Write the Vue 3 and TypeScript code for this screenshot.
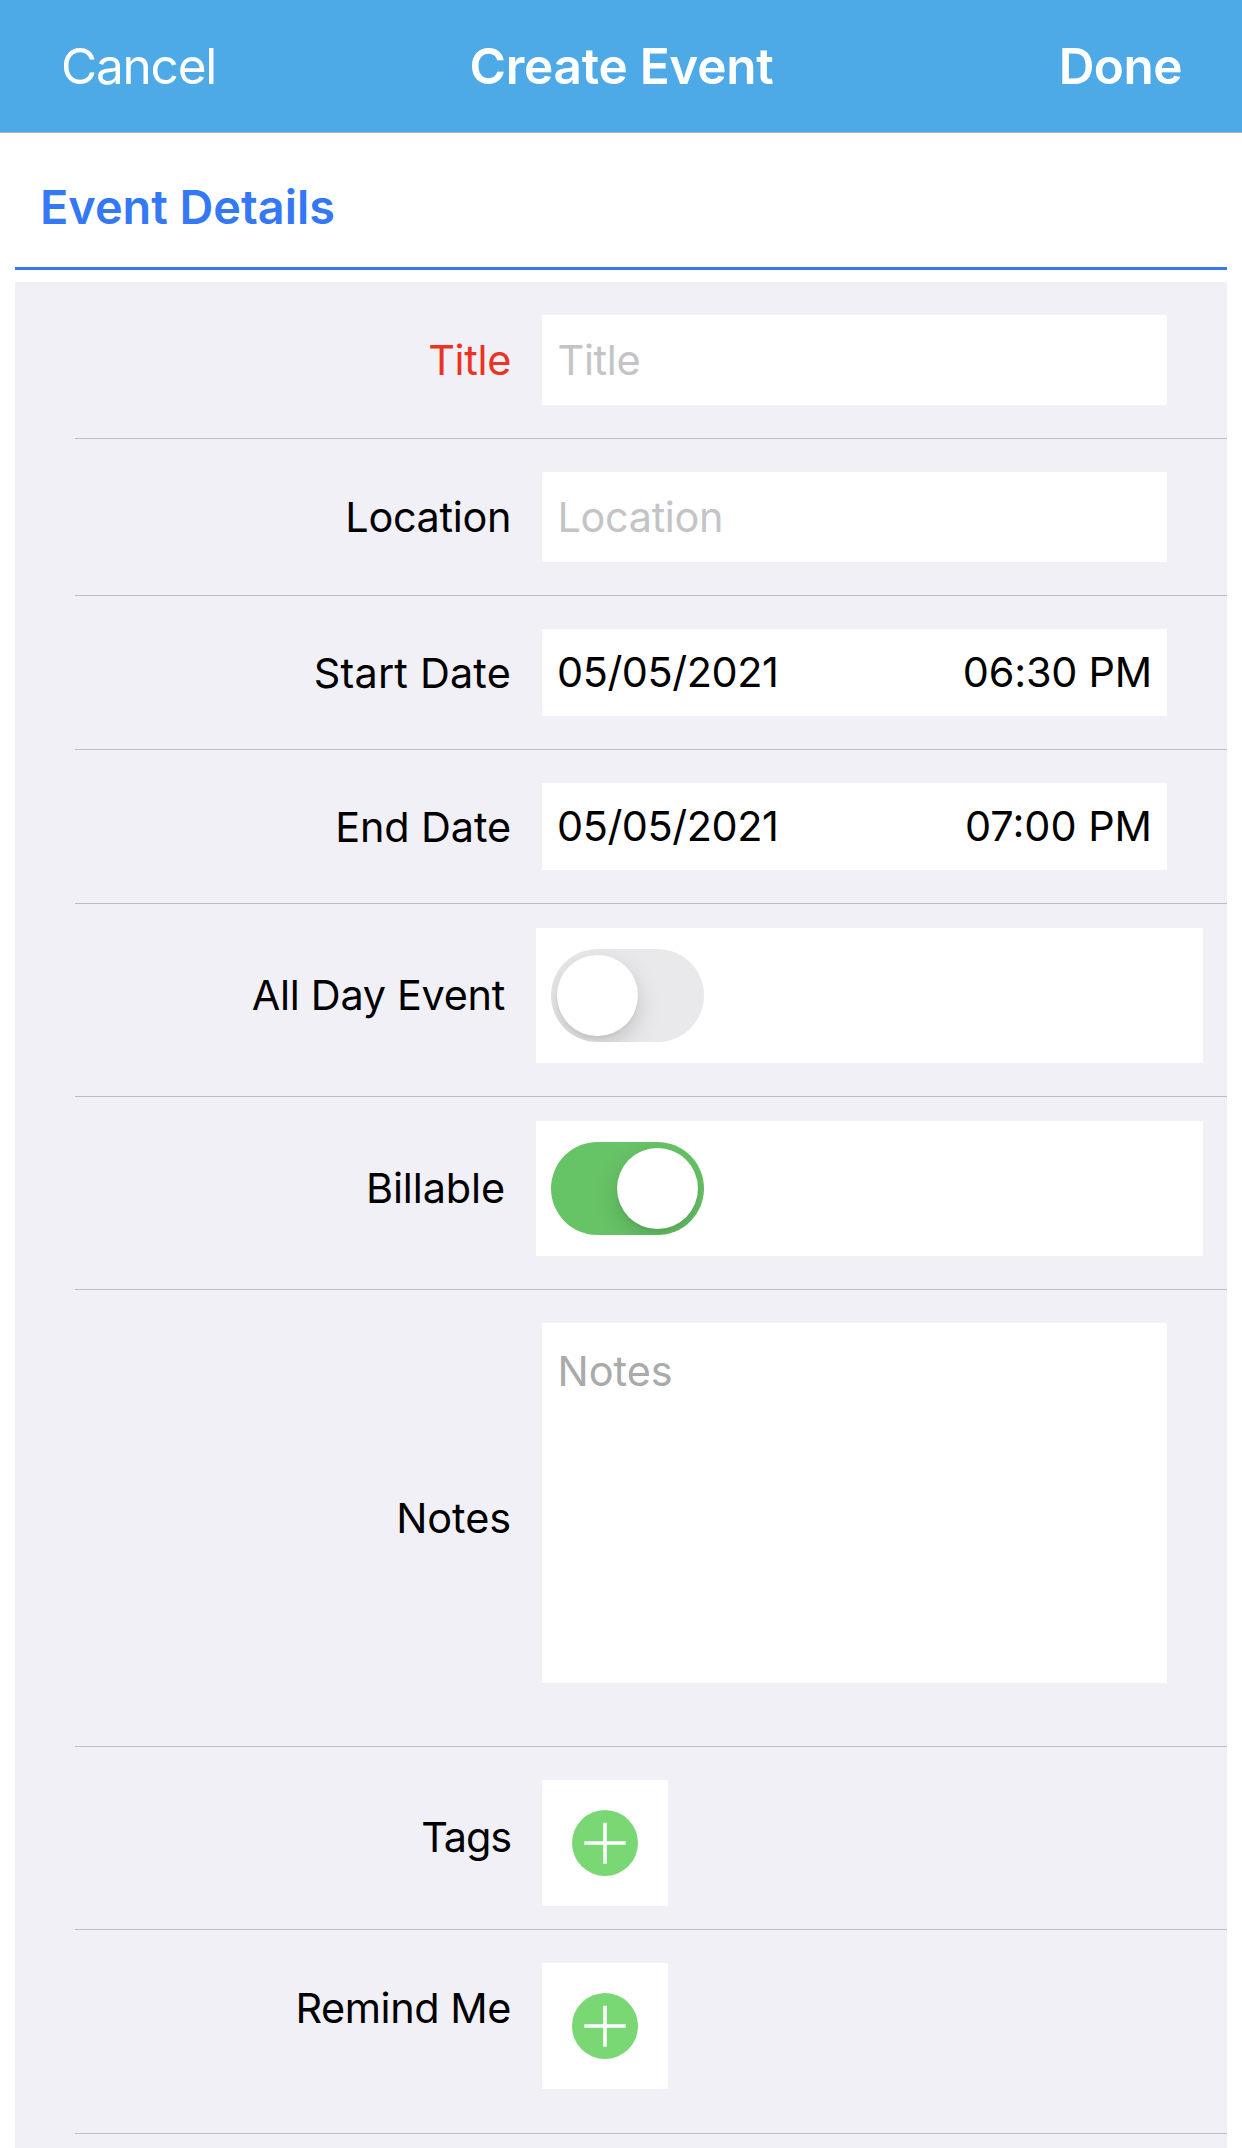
<script setup lang="ts">
import { reactive } from 'vue'

type RowKind = 'text' | 'date' | 'switch' | 'notes' | 'add'

interface Row {
  key: string
  label: string
  kind: RowKind
  tracking: number
  required?: boolean
}

// tracking is the letter spacing of each label, in pixels
const rows: Row[] = [
  { key: 'title', label: 'Title', kind: 'text', tracking: -0.33, required: true },
  { key: 'location', label: 'Location', kind: 'text', tracking: -0.34 },
  { key: 'start', label: 'Start Date', kind: 'date', tracking: 0.18 },
  { key: 'end', label: 'End Date', kind: 'date', tracking: -0.11 },
  { key: 'allDay', label: 'All Day Event', kind: 'switch', tracking: -0.3 },
  { key: 'billable', label: 'Billable', kind: 'switch', tracking: -0.11 },
  { key: 'notes', label: 'Notes', kind: 'notes', tracking: -0.07 },
  { key: 'tags', label: 'Tags', kind: 'add', tracking: -1.1 },
  { key: 'remind', label: 'Remind Me', kind: 'add', tracking: -0.43 },
]

const texts = reactive<Record<string, string>>({ title: '', location: '', notes: '' })
const flags = reactive<Record<string, boolean>>({ allDay: false, billable: true })
const dates: Record<string, { day: string; time: string; tracking: number }> = {
  start: { day: '05/05/2021', time: '06:30 PM', tracking: -0.21 },
  end: { day: '05/05/2021', time: '07:00 PM', tracking: 0 },
}
</script>

<template>
  <div class="screen">
    <header class="navbar">
      <button class="nav-btn cancel" type="button">Cancel</button>
      <h1 class="nav-title">Create Event</h1>
      <button class="nav-btn done" type="button">Done</button>
    </header>

    <h2 class="section-title">Event Details</h2>

    <main class="form">
      <div v-for="row in rows" :key="row.key" class="row" :class="[row.kind, row.key]">
        <span class="label" :class="{ required: row.required }" :style="{ letterSpacing: row.tracking + 'px' }">{{ row.label }}</span>

        <input
          v-if="row.kind === 'text'"
          v-model="texts[row.key]"
          class="field"
          type="text"
          :placeholder="row.label"
          :style="{ letterSpacing: row.tracking + 'px' }"
        />

        <div v-else-if="row.kind === 'date'" class="field">
          <span class="day">{{ dates[row.key].day }}</span>
          <span :style="{ letterSpacing: dates[row.key].tracking + 'px' }">{{ dates[row.key].time }}</span>
        </div>

        <div v-else-if="row.kind === 'switch'" class="field">
          <button
            class="switch"
            :class="{ on: flags[row.key] }"
            type="button"
            role="switch"
            :aria-checked="flags[row.key]"
            :aria-label="row.label"
            @click="flags[row.key] = !flags[row.key]"
          >
            <span class="knob"></span>
          </button>
        </div>

        <textarea v-else-if="row.kind === 'notes'" v-model="texts.notes" class="field" placeholder="Notes"></textarea>

        <button v-else class="field" type="button" :aria-label="'Add ' + row.label">
          <svg width="66" height="66" viewBox="0 0 66 66" aria-hidden="true">
            <circle cx="33" cy="33" r="33" fill="#79d774" />
            <path d="M12.3 33H53.7M33 12.8V53.8" stroke="#fff" stroke-width="3.6" fill="none" />
          </svg>
        </button>
      </div>
    </main>
  </div>
</template>

<style>
html,
body {
  margin: 0;
  background: #fff;
}
</style>

<style scoped>
.screen {
  box-sizing: border-box;
  width: 1242px;
  height: 2148px;
  display: flex;
  flex-direction: column;
  overflow: hidden;
  background: #fff;
  color: #000;
  font-family: Inter, 'Liberation Sans', sans-serif;
  font-size: 41.4px;
  line-height: 50px;
}

button,
input,
textarea {
  box-sizing: border-box;
  margin: 0;
  padding: 0;
  border: 0;
  border-radius: 0;
  outline: none;
  font: inherit;
  color: inherit;
  background: none;
}

.navbar {
  flex: none;
  display: grid;
  grid-template-columns: 1fr auto 1fr;
  align-items: center;
  height: 132px;
  padding: 0 60px 0 61px;
  border-bottom: 1px solid #b1b1b6;
  background: #4daae6;
  color: #fff;
}

.nav-btn,
.nav-title {
  margin: 0;
  font-size: 49.5px;
  line-height: 60px;
  font-weight: 600;
  white-space: nowrap;
}

.cancel {
  justify-self: start;
  font-weight: 400;
  letter-spacing: -1.2px;
}

.nav-title {
  letter-spacing: -0.26px;
}

.done {
  justify-self: end;
  letter-spacing: -0.52px;
}

.section-title {
  flex: none;
  margin: 0 15px;
  padding: 46px 25px 32px;
  border-bottom: 3px solid #3478f6;
  color: #3478f6;
  font-size: 46.8px;
  line-height: 56px;
  font-weight: 600;
}

.form {
  flex: 1;
  margin: 12px 15px 0;
  padding-left: 60px;
  background: #f1f0f6;
}

.row {
  display: grid;
  grid-template-columns: 436px 1fr;
  column-gap: 31px;
  align-items: start;
  padding: 33px 60px 33px 0;
  border-bottom: 1px solid #bdbcc2;
}

.label {
  margin-top: 20px;
  text-align: right;
  white-space: nowrap;
}

.label.required {
  color: #ea3323;
}

.field {
  display: block;
  width: 100%;
  background: #fff;
}

input.field {
  height: 90px;
  padding: 0 15.5px;
}

.field::placeholder {
  color: #c4c4c6;
  opacity: 1;
}

.date .label {
  margin-top: 19px;
}

.date .field {
  box-sizing: border-box;
  display: flex;
  justify-content: space-between;
  height: 87px;
  padding: 18px 15px 0;
}

.day {
  letter-spacing: -0.44px;
}

.switch.row {
  grid-template-columns: 430px 1fr;
  padding: 24px 24px 33px 0;
}

.switch .label {
  margin-top: 42px;
}

.switch .field {
  box-sizing: border-box;
  display: flex;
  align-items: center;
  height: 135px;
  padding: 0 15px;
}

button.switch {
  display: flex;
  align-items: center;
  width: 153px;
  height: 93px;
  padding: 0 6px;
  border-radius: 47px;
  overflow: hidden;
  background: #e9e9eb;
}

button.switch.on {
  justify-content: flex-end;
  background: #67c466;
}

.knob {
  width: 81px;
  height: 81px;
  border-radius: 50%;
  background: #fff;
  box-shadow: 0 9px 24px rgba(0, 0, 0, 0.16), 0 3px 3px rgba(0, 0, 0, 0.04);
}

.notes.row {
  padding-bottom: 63px;
}

.notes .label {
  margin-top: 170px;
}

textarea.field {
  height: 360px;
  padding: 23px 15.5px;
  resize: none;
}

textarea.field::placeholder {
  color: #aaa;
}

.add .field {
  display: flex;
  align-items: center;
  justify-content: center;
  width: 126px;
  height: 126px;
}

.tags.row {
  padding-bottom: 23px;
}

.tags .label {
  margin-top: 32px;
}

.remind.row {
  padding-bottom: 44px;
}
</style>
